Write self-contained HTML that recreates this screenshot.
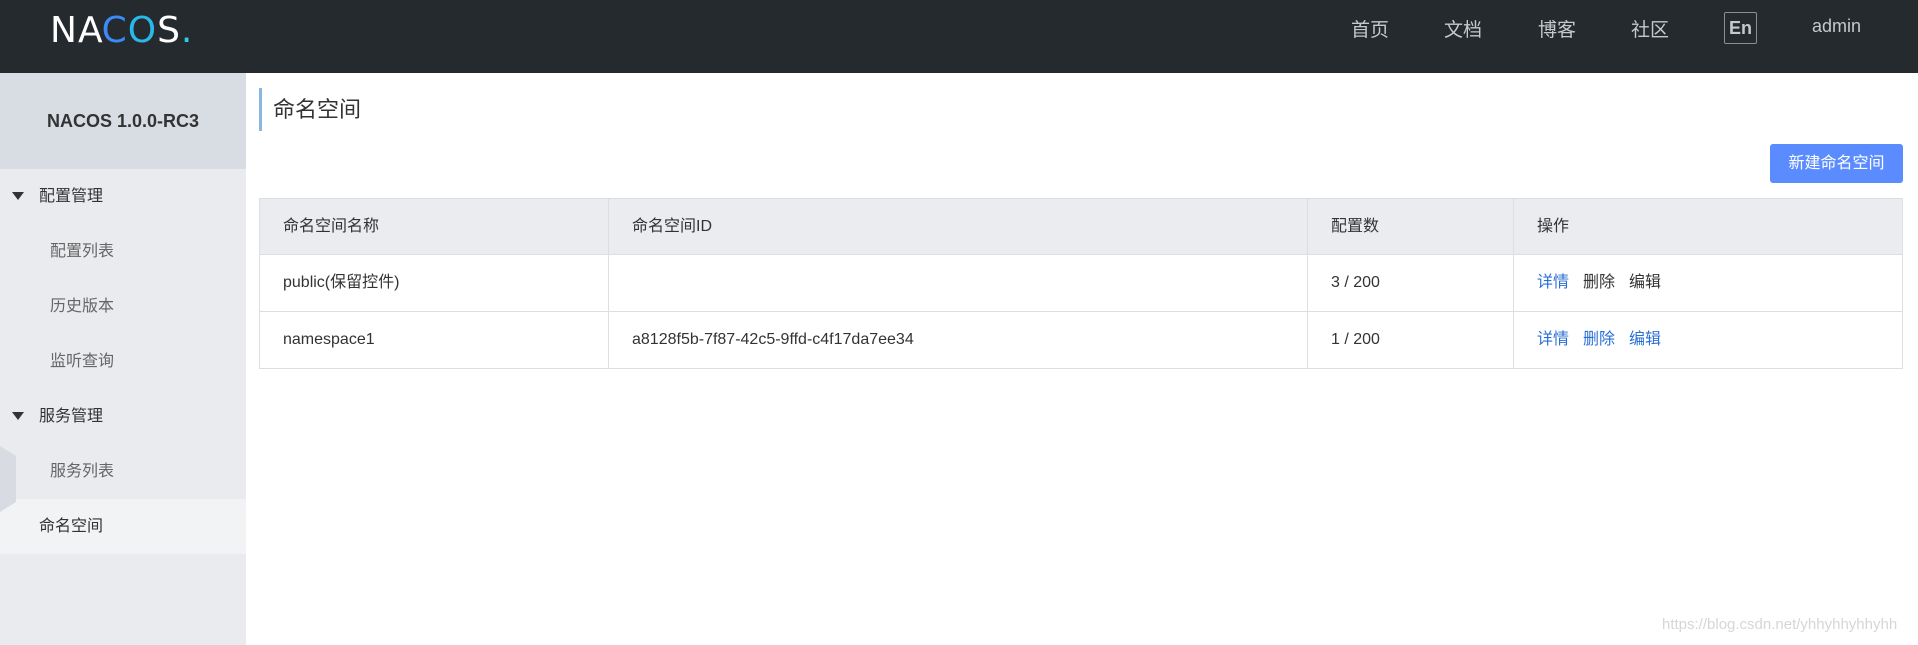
<!DOCTYPE html>
<html><head><meta charset="utf-8"><style>
*{margin:0;padding:0;box-sizing:border-box}
body{width:1918px;height:645px;overflow:hidden;background:#fff;font-family:"Liberation Sans","Noto Sans CJK SC",sans-serif;position:relative;color:#333}
.hdr{position:absolute;left:0;top:0;width:1918px;height:73px;background:#252a2f}
.logo{position:absolute;left:50px;top:10px;font-size:36px;font-weight:normal;color:#fff;letter-spacing:1px;font-family:"DejaVu Sans","Liberation Sans",sans-serif}
.nav{position:absolute;top:15px;font-size:19px;color:#c5c8cc}
.en{position:absolute;left:1724px;top:12px;width:33px;height:32px;border:1px solid #8a8e93;border-radius:2px;color:#c5c8cc;font-size:18px;font-weight:bold;text-align:center;line-height:30px}
.side{position:absolute;left:0;top:73px;width:246px;height:572px;background:#e9ebef}
.ver{position:absolute;left:0;top:0;width:246px;height:96px;background:#d8dde4;text-align:center;line-height:96px;font-weight:bold;font-size:18px;color:#333}
.mi{position:absolute;font-size:16px;color:#333;height:55px;line-height:55px;width:246px}
.sub{color:#666}
.tri{position:absolute;left:12px;top:23px;width:0;height:0;border-left:6px solid transparent;border-right:6px solid transparent;border-top:8px solid #333}
.title{position:absolute;left:259px;top:88px;height:43px;border-left:3px solid #88b7e0;padding-left:11px;font-size:22px;line-height:43px;color:#333}
.btn{position:absolute;left:1770px;top:144px;width:133px;height:39px;background:#5b8cff;border-radius:3px;color:#fff;font-size:16px;text-align:center;line-height:39px}
table{position:absolute;left:259px;top:198px;width:1644px;border-collapse:collapse;font-size:16px;line-height:22px}
td,th{border:1px solid #dcdee3;padding:0 0 0 23px;text-align:left;font-weight:normal;color:#333;vertical-align:middle}
th{background:#ebecf0;height:56px}
td{height:57px}
a{color:#2a6fd6;text-decoration:none;margin-right:14px}
.dk{color:#333}
.wm{position:absolute;left:1662px;top:616px;font-size:15px;color:#d6d6d6}
</style></head><body>
<div class="hdr">
<div class="logo">N<span style="letter-spacing:-1px">A</span><span style="color:#3b8af5">C</span><span style="color:#2ab8e8">O</span>S<span style="color:#27d0e8">.</span></div>
<div class="nav" style="left:1351px">首页</div>
<div class="nav" style="left:1444px">文档</div>
<div class="nav" style="left:1538px">博客</div>
<div class="nav" style="left:1631px">社区</div>
<div class="en">En</div>
<div class="nav" style="left:1812px;top:16px;font-size:18px">admin</div>
</div>
<div class="side">
<div class="ver">NACOS 1.0.0-RC3</div>
<div class="mi" style="top:96px"><div class="tri"></div><span style="margin-left:39px">配置管理</span></div>
<div class="mi sub" style="top:151px"><span style="margin-left:50px">配置列表</span></div>
<div class="mi sub" style="top:206px"><span style="margin-left:50px">历史版本</span></div>
<div class="mi sub" style="top:261px"><span style="margin-left:50px">监听查询</span></div>
<div class="mi" style="top:316px"><div class="tri"></div><span style="margin-left:39px">服务管理</span></div>
<div class="mi sub" style="top:371px"><span style="margin-left:50px">服务列表</span></div>
<div class="mi" style="top:426px;background:#f2f3f5"><span style="margin-left:39px">命名空间</span></div>
<svg style="position:absolute;left:0;top:373px" width="16" height="66"><polygon points="0,0 16,10 16,56 0,66" fill="#d8dce2"/></svg>
</div>
<div class="title">命名空间</div>
<div class="btn">新建命名空间</div>
<table>
<tr><th style="width:349px">命名空间名称</th><th style="width:699px">命名空间ID</th><th style="width:206px">配置数</th><th>操作</th></tr>
<tr><td>public(保留控件)</td><td></td><td>3 / 200</td><td><a>详情</a><a class="dk">删除</a><a class="dk">编辑</a></td></tr>
<tr><td>namespace1</td><td>a8128f5b-7f87-42c5-9ffd-c4f17da7ee34</td><td>1 / 200</td><td><a>详情</a><a>删除</a><a>编辑</a></td></tr>
</table>
<div class="wm">https://blog.csdn.net/yhhyhhyhhyhh</div>
</body></html>
